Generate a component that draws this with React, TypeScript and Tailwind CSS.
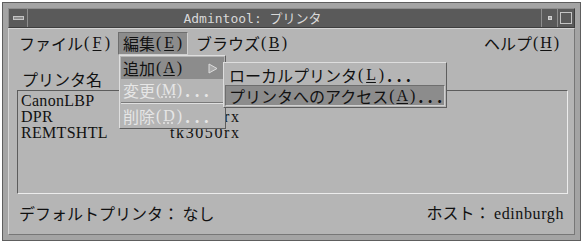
import React from "react";

const jp = "font-['Noto_Sans_CJK_JP',sans-serif]";
const serif = "font-['Liberation_Serif','Noto_Sans_CJK_JP',serif]";

// mnemonic letter in parens, underlined
const Mn = ({ k, dim }: { k: string; dim?: boolean }) => (
  <span className={`${serif} text-[16px] inline-flex shrink-0 w-[26px] justify-between items-center mx-[1px]`}>
    <span>(</span>
    <span className={dim ? "underline decoration-dotted underline-offset-2" : "underline underline-offset-2"}>{k}</span>
    <span>)</span>
  </span>
);

const Dots = () => (
  <span className="inline-flex shrink-0 w-[24px] justify-between ml-[2px] font-bold">
    <span>.</span>
    <span>.</span>
    <span>.</span>
  </span>
);

const rows = [
  { name: "CanonLBP", host: "" },
  { name: "DPR", host: "tk3050rx" },
  { name: "REMTSHTL", host: "tk3050rx" },
];

const App = () => {
  return (
    <div className={`relative w-[585px] h-[246px] bg-white pt-[2px] pl-[2px] ${jp} text-[16px] text-[#111] whitespace-nowrap`}>
      {/* window frame */}
      <div className="w-[579px] h-[239px] bg-[#a4a4a4] border border-[#5e5e5e] p-[5px] flex flex-col">
        {/* title bar */}
        <div className="flex h-[20px] bg-[#5a5a5a] border border-t-[#8e8e8e] border-l-[#8e8e8e] border-b-[#3e3e3e] border-r-[#3e3e3e]">
          <div className="w-[19px] flex items-center justify-center border-r border-[#8e8e8e]">
            <div className="w-[11px] h-[4px] bg-[#8c8c8c] border border-[#c4c4c4]" />
          </div>
          <div className="flex-1 flex items-center justify-center pr-[64px] text-[#d8d8d8] text-[13px] font-['DejaVu_Sans_Mono','Noto_Sans_CJK_JP',monospace] leading-none">
            Admintool: プリンタ
          </div>
          <div className="w-[16px] flex items-center justify-center border-l border-[#8e8e8e]">
            <div className="w-[4px] h-[4px] bg-[#a8a8a8] border border-[#d0d0d0]" />
          </div>
          <div className="w-[17px] flex items-center justify-center border-l border-[#8e8e8e]">
            <div className="w-[12px] h-[12px] bg-[#5a5a5a] border border-[#c4c4c4]" />
          </div>
        </div>

        {/* body */}
        <div className="flex-1 bg-[#b5b5b5] border border-t-[#d4d4d4] border-l-[#d4d4d4] border-b-[#777] border-r-[#777] flex flex-col">
          {/* menu bar */}
          <div className="h-[27px] flex items-center pl-[5px] pt-[1px]">
            <div className="px-[5px] h-[23px] flex items-center">
              ファイル<Mn k="F" />
            </div>
            <div className="ml-[2px] px-[4px] h-[23px] flex items-center bg-[#8c8c8c] border border-t-[#6e6e6e] border-l-[#6e6e6e] border-b-[#d0d0d0] border-r-[#d0d0d0]">
              編集<Mn k="E" />
            </div>
            <div className="pl-[8px] pr-[5px] h-[23px] flex items-center">
              ブラウズ<Mn k="B" />
            </div>
            <div className="flex-1" />
            <div className="pr-[14px] h-[23px] flex items-center">
              ヘルプ<Mn k="H" />
            </div>
          </div>

          {/* label */}
          <div className="mt-[13px] ml-[13px] h-[20px] flex items-center leading-none">プリンタ名</div>

          {/* list */}
          <div className="mt-[1px] ml-[8px] mr-[6px] h-[104px] border border-t-[#5c5c5c] border-l-[#5c5c5c] border-b-[#ececec] border-r-[#ececec] pt-[2px] pl-[3px]">
            {rows.map((r) => (
              <div key={r.name} className={`flex h-[16px] items-center ${serif} text-[16px] leading-none tracking-[0.3px]`}>
                <span className="w-[149px]">{r.name}</span>
                <span className="tracking-[1.6px]">{r.host}</span>
              </div>
            ))}
          </div>

          {/* status */}
          <div className="mt-[8px] mx-[10px] h-[22px] flex items-center justify-between leading-none">
            <span>デフォルトプリンタ：&nbsp;なし</span>
            <span>
              ホスト：&nbsp;<span className={`${serif} text-[16px] tracking-[0.6px]`}>edinburgh</span>
            </span>
          </div>
        </div>
      </div>

      {/* edit dropdown */}
      <div className="absolute left-[119px] top-[55px] w-[107px] bg-[#b5b5b5] border border-t-[#dedede] border-l-[#dedede] border-b-[#5e5e5e] border-r-[#5e5e5e] p-[1px]">
        <div className="h-[22px] flex items-center pl-[2px] pr-[6px] bg-[#8c8c8c]">
          <span className="flex-1 flex items-center">追加<Mn k="A" /></span>
          <svg width="10" height="11" viewBox="0 0 10 11">
            <path d="M1 1 L9 5.5 L1 10 Z" fill="#a8a8a8" stroke="#dcdcdc" strokeWidth="1" />
          </svg>
        </div>
        <div className="h-[22px] flex items-center pl-[2px] text-[#e6e6e6]">
          変更<Mn k="M" dim /><Dots />
        </div>
        <div className="h-[2px] my-[1px] border-t border-[#7a7a7a] border-b border-b-[#e0e0e0]" />
        <div className="h-[22px] flex items-center pl-[2px] text-[#e6e6e6]">
          削除<Mn k="D" dim /><Dots />
        </div>
      </div>

      {/* add submenu */}
      <div className="absolute left-[223px] top-[62px] w-[224px] bg-[#b5b5b5] border border-t-[#dedede] border-l-[#dedede] border-b-[#5e5e5e] border-r-[#5e5e5e] p-[1px]">
        <div className="h-[21px] flex items-center pl-[4px]">
          <span className="shrink-0">ローカルプリンタ</span><Mn k="L" /><Dots />
        </div>
        <div className="h-[21px] flex items-center pl-[3px] bg-[#8c8c8c] border border-t-[#6e6e6e] border-l-[#6e6e6e] border-b-[#d0d0d0] border-r-[#d0d0d0]">
          <span className="shrink-0">プリンタへのアクセス</span><Mn k="A" /><Dots />
        </div>
      </div>
    </div>
  );
};

export default App;
